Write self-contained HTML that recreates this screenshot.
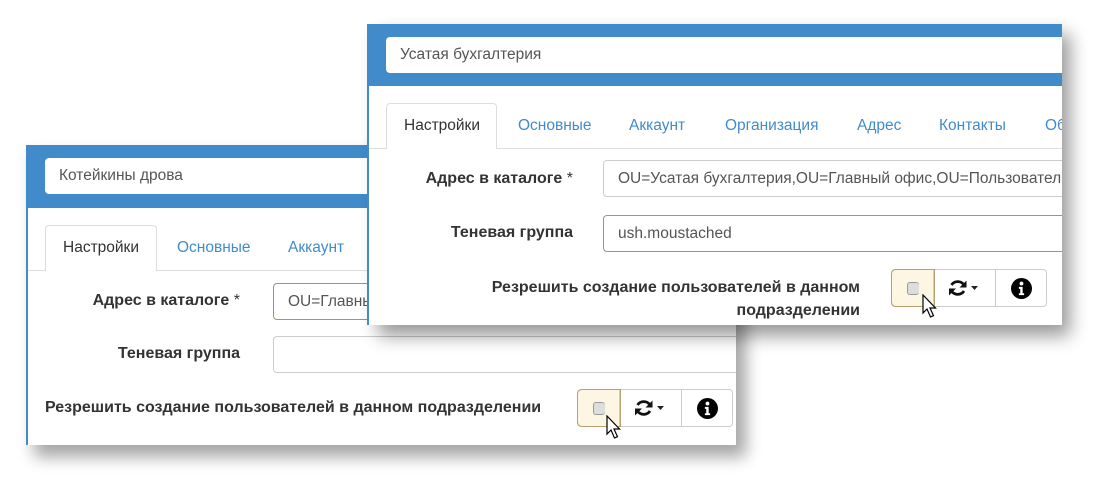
<!DOCTYPE html>
<html><head><meta charset="utf-8"><style>
*{box-sizing:border-box;margin:0;padding:0}
body{width:1105px;height:481px;background:#fff;position:relative;overflow:hidden;font-family:"Liberation Sans",Arial,sans-serif;font-size:15.5px;color:#333}
.p{position:absolute;background:#fff;overflow:hidden;border-left:2px solid #428bca}
.hd{position:absolute;left:0;right:0;top:0;background:#428bca}
.in{position:absolute;background:#fff;border:1px solid #ccc;border-radius:4px;padding-left:14px;display:flex;align-items:center;color:#555;white-space:nowrap;overflow:hidden}
.hin{border:none;border-radius:4px;color:#555}
.gold{border-color:#a8916b}
.t{position:absolute;white-space:nowrap}
.tab{position:absolute;border:1px solid #ddd;border-bottom:none;border-radius:4px 4px 0 0;background:#fff}
.ln{position:absolute;height:1px;background:#ddd}
.lk{color:#428bca}
.lb{position:absolute;font-weight:bold;font-size:16px;white-space:nowrap;text-align:right;color:#333}
.bg{position:absolute;height:38px;display:flex;border:1px solid #ccc;border-radius:4px;background:#fff}
.bg div{display:flex;align-items:center;justify-content:center;border-right:1px solid #ccc}
.bg div:last-child{border-right:none}
.chk{background:#fcf6e3;outline:1px solid #b8a070;border-radius:4px 0 0 4px}
.box{width:12px;height:13px;border:1px solid #999;border-radius:3px;background:#ddd}
</style></head><body>

<!-- back panel -->
<div style="position:absolute;left:34px;top:155px;width:712px;height:302px;background:#000;opacity:.35;filter:blur(8px)"></div>
<div class="p" style="left:26px;top:145px;width:710px;height:300px">
 <div class="hd" style="height:63px"></div>
 <div class="in hin" style="left:17px;top:13px;width:700px;height:36px">Котейкины дрова</div>
 <div class="ln" style="left:0;right:0;top:125px"></div>
 <div class="tab" style="left:17px;top:80px;width:112px;height:46px"></div>
 <div class="t" style="left:35px;top:94px">Настройки</div>
 <div class="t lk" style="left:149px;top:94px">Основные</div>
 <div class="t lk" style="left:260px;top:94px">Аккаунт</div>
 <div class="lb" style="left:40px;top:147px;width:172px">Адрес в каталоге <span style="font-weight:normal">*</span></div>
 <div class="in gold" style="left:245px;top:138px;width:500px;height:37px">OU=Главный офис</div>
 <div class="lb" style="left:40px;top:200px;width:172px">Теневая группа</div>
 <div class="in" style="left:245px;top:191px;width:500px;height:37px"></div>
 <div class="lb" style="left:17px;top:254px;text-align:left">Резрешить создание пользователей в данном подразделении</div>
 <div class="bg" style="left:549px;top:244px;width:156px">
  <div class="chk" style="width:42px"><div class="box"></div></div>
  <div style="width:62px"><svg width="34" height="22" viewBox="0 0 34 22"><path d="M16 8A7.5 7.5 0 0 0 3.5 8" fill="none" stroke="#111" stroke-width="2.8"/><path d="M18.5 3.5v7h-7z" fill="#111"/><path d="M3.5 14A7.5 7.5 0 0 0 16 14" fill="none" stroke="#111" stroke-width="2.8"/><path d="M1 18.5v-7h7z" fill="#111"/><path d="M23 9h7l-3.5 4z" fill="#222"/></svg></div>
  <div style="flex:1"><svg width="21" height="21" viewBox="0 0 20 20"><circle cx="10" cy="10" r="10" fill="#000"/><circle cx="10" cy="5.3" r="1.8" fill="#fff"/><path d="M7.5 8.5h3.6v6h1.4v1.8h-5v-1.8h1.3v-4.2h-1.3z" fill="#fff"/></svg></div>
 </div>
 <svg style="position:absolute;left:578px;top:270px" width="16" height="26" viewBox="0 0 16 26"><path d="M1 1v18l4-4 3.5 8 3-1.3-3.5-7.7h5.5z" fill="#fff" stroke="#000" stroke-width="1.2"/></svg>
</div>

<!-- front panel -->
<div style="position:absolute;left:378px;top:34px;width:692px;height:302px;background:#000;opacity:.4;filter:blur(9px)"></div>
<div class="p" style="left:367px;top:24px;width:695px;height:301px">
 <div class="hd" style="height:62px"></div>
 <div class="in hin" style="left:17px;top:13px;width:700px;height:36px">Усатая бухгалтерия</div>
 <div class="ln" style="left:0;right:0;top:124px"></div>
 <div class="tab" style="left:17px;top:79px;width:111px;height:46px"></div>
 <div class="t" style="left:35px;top:93px">Настройки</div>
 <div class="t lk" style="left:149px;top:93px">Основные</div>
 <div class="t lk" style="left:260px;top:93px">Аккаунт</div>
 <div class="t lk" style="left:356px;top:93px">Организация</div>
 <div class="t lk" style="left:488px;top:93px">Адрес</div>
 <div class="t lk" style="left:570px;top:93px">Контакты</div>
 <div class="t lk" style="left:676px;top:93px">Об</div>
 <div class="lb" style="left:10px;top:146px;width:194px">Адрес в каталоге <span style="font-weight:normal">*</span></div>
 <div class="in" style="left:234px;top:136px;width:500px;height:37px">OU=Усатая бухгалтерия,OU=Главный офис,OU=Пользователи</div>
 <div class="lb" style="left:10px;top:200px;width:194px">Теневая группа</div>
 <div class="in gold" style="left:234px;top:191px;width:500px;height:37px">ush.moustached</div>
 <div class="lb" style="left:60px;top:252px;width:431px;line-height:23px">Резрешить создание пользователей в данном<br>подразделении</div>
 <div class="bg" style="left:522px;top:245px;width:156px">
  <div class="chk" style="width:42px"><div class="box"></div></div>
  <div style="width:62px"><svg width="34" height="22" viewBox="0 0 34 22"><path d="M16 8A7.5 7.5 0 0 0 3.5 8" fill="none" stroke="#111" stroke-width="2.8"/><path d="M18.5 3.5v7h-7z" fill="#111"/><path d="M3.5 14A7.5 7.5 0 0 0 16 14" fill="none" stroke="#111" stroke-width="2.8"/><path d="M1 18.5v-7h7z" fill="#111"/><path d="M23 9h7l-3.5 4z" fill="#222"/></svg></div>
  <div style="flex:1"><svg width="21" height="21" viewBox="0 0 20 20"><circle cx="10" cy="10" r="10" fill="#000"/><circle cx="10" cy="5.3" r="1.8" fill="#fff"/><path d="M7.5 8.5h3.6v6h1.4v1.8h-5v-1.8h1.3v-4.2h-1.3z" fill="#fff"/></svg></div>
 </div>
 <svg style="position:absolute;left:553px;top:270px" width="16" height="26" viewBox="0 0 16 26"><path d="M1 1v18l4-4 3.5 8 3-1.3-3.5-7.7h5.5z" fill="#fff" stroke="#000" stroke-width="1.2"/></svg>
</div>
</body></html>
